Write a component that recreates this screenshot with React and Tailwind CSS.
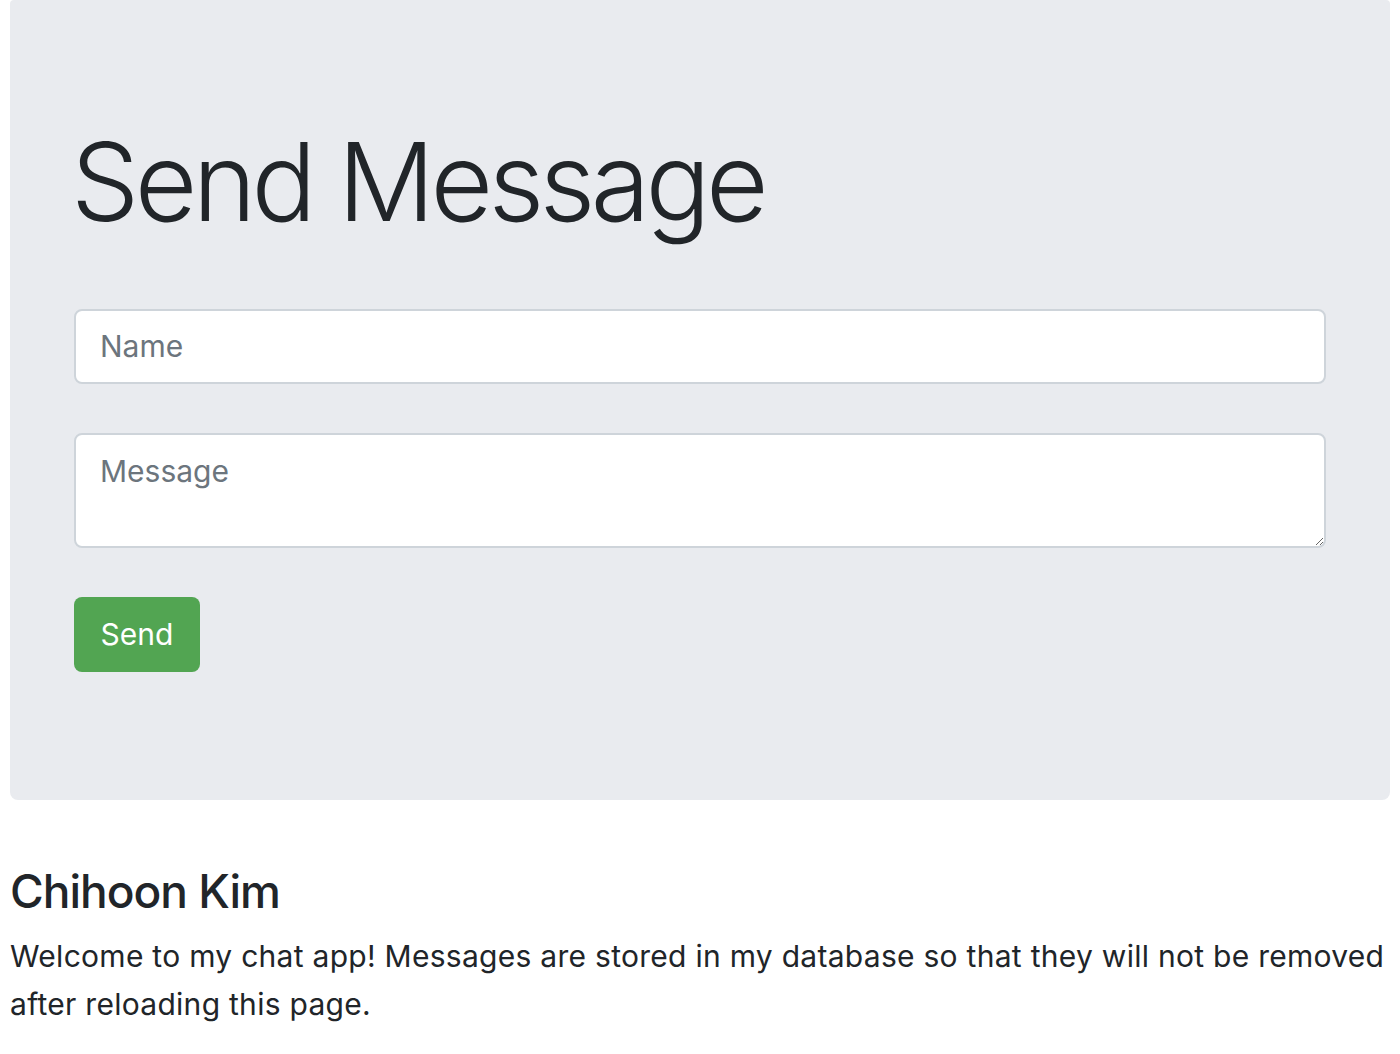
export default function App() {
  return (
    <div className="min-h-[1054px] bg-white px-[10px] font-['Inter',sans-serif] text-[#212529]">
      {/* Jumbotron */}
      <div className="rounded-b-lg rounded-tl-sm rounded-tr-sm bg-[#e9ebef] px-16 pb-32 pt-[117px]">
        <h1 className="-ml-[3px] mb-[62px] text-[108px] font-light leading-[1.2] tracking-[-4.6px]">Send Message</h1>
        <form className="flex flex-col" onSubmit={e => e.preventDefault()}>
          <input
            type="text"
            placeholder="Name"
            className="h-[75px] w-full rounded-lg border-2 border-[#ced4da] bg-white px-6 text-[30px] text-[#495057] outline-none placeholder:text-[#6c757d]"
          />
          <textarea
            placeholder="Message"
            className="mt-[49px] h-[115px] w-full rounded-lg border-2 border-[#ced4da] bg-white px-6 py-[14px] text-[30px] leading-[1.5] text-[#495057] outline-none placeholder:text-[#6c757d]"
          />
          <div className="mt-[49px]">
            <button
              type="submit"
              className="h-[75px] w-[126px] rounded-lg bg-[#52a552] text-[30px] text-white"
            >
              Send
            </button>
          </div>
        </form>
      </div>

      {/* About */}
      <div className="pt-16">
        <h3 className="mb-[13px] text-[46px] font-medium leading-[1.2] tracking-[-1px]">Chihoon Kim</h3>
        <p className="text-[30px] leading-[48px] tracking-[0.28px]">
          Welcome to my chat app! Messages are stored in my database so that they will not be removed after reloading this page.
        </p>
      </div>
    </div>
  )
}
